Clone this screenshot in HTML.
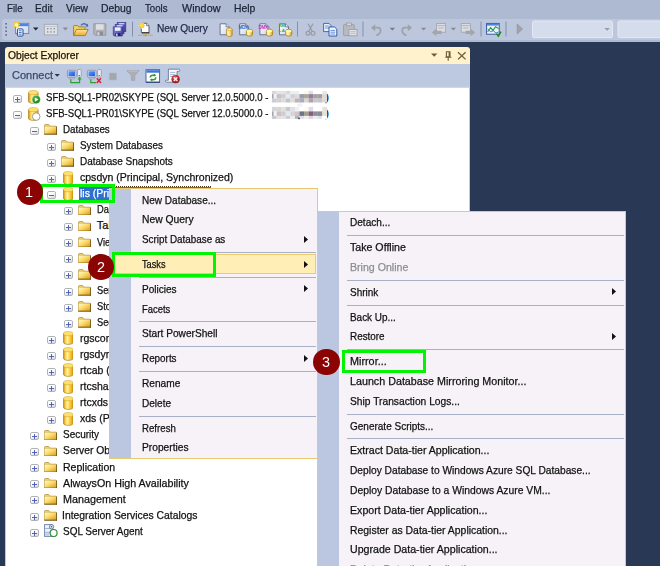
<!DOCTYPE html>
<html lang="en">
<head>
<meta charset="utf-8">
<title>Object Explorer - Tasks - Mirror</title>
<style>
html,body{margin:0;padding:0}
body{width:660px;height:566px;overflow:hidden;background:#293955;position:relative;font-family:"Liberation Sans",sans-serif;font-size:11px;line-height:14px;color:#111}
.abs{position:absolute}
.t{-webkit-text-stroke:0.25px currentColor;position:absolute;white-space:nowrap;transform-origin:0 50%;height:14px;line-height:14px;display:block}
#menubar{left:0;top:0;width:660px;height:42px;background:#aebad1}
#toolbar{left:2px;top:19px;width:670px;height:20.5px;background:#bcc7dd;border-radius:3px}
#oe-title{left:5px;top:47px;width:465px;height:17.3px;background:#fff2cd;border-radius:3px 3px 0 0}
#oe-tools{left:5px;top:64.3px;width:465px;height:23.7px;background:linear-gradient(#bdc8e1 0,#bdc8e1 92%,#d3dbec 100%)}
#oe-tree{left:6px;top:88px;width:463px;height:478px;background:#fff;overflow:hidden}
#oe-frame{left:5px;top:64px;width:465px;height:502px;background:#bdc8e1}
.sep{height:1.2px;background:#a7b0c5}
.menu{background:#f6f2f7;border:1px solid #e8c870;box-sizing:border-box}
.iconcol{background:#bbc6e0}
.hl{background:#ffeeb6;border:1px solid #ebcb72;box-sizing:border-box}
.green{border:3.6px solid #02f402;box-sizing:border-box}
.num{color:#fff;font-size:15px;height:16px;line-height:16px;-webkit-text-stroke:0;transform:scaleX(0.96)}
.circ{border-radius:50%;background:#8b0303;color:#fff;text-align:center}
.blur{filter:blur(1.6px)}
</style>
</head>
<body>
<svg width="0" height="0" style="position:absolute">
<defs>
<linearGradient id="g-folder" x1="0" y1="0" x2="1" y2="1"><stop offset="0" stop-color="#fffad0"/><stop offset="0.42" stop-color="#fbdd70"/><stop offset="1" stop-color="#dc9410"/></linearGradient>
<linearGradient id="g-db" x1="0" y1="0" x2="1" y2="0"><stop offset="0" stop-color="#c08a18"/><stop offset="0.16" stop-color="#f4c840"/><stop offset="0.4" stop-color="#fff2a0"/><stop offset="0.62" stop-color="#fcd648"/><stop offset="1" stop-color="#de980e"/></linearGradient>
<linearGradient id="g-box" x1="0" y1="0" x2="0.6" y2="1"><stop offset="0" stop-color="#ffffff"/><stop offset="0.5" stop-color="#fbfbfc"/><stop offset="1" stop-color="#dcdde2"/></linearGradient>
<radialGradient id="g-go" cx="0.4" cy="0.35"><stop offset="0" stop-color="#58c058"/><stop offset="1" stop-color="#1f8a1f"/></radialGradient>
<g id="i-folder">
<path d="M0.4 3 V1.6 Q0.4 0.5 1.5 0.5 H4.3 Q5 0.5 5.4 1.2 L6 2.2 H12 V3Z" fill="#edcf6e" stroke="#b08a30" stroke-width="0.7"/>
<path d="M0.4 2.6 H12.8 V10.2 H0.4Z" fill="url(#g-folder)"/>
<path d="M0.4 2.6 V10.2" stroke="#c29c40" stroke-width="0.7"/>
<path d="M0.2 10.2 H13 M12.7 2.4 V10.7" stroke="#6b4c10" stroke-width="1" fill="none"/>
</g>
<g id="i-db">
<path d="M0.5 2.6 V11.2 C0.5 12.6 2.6 13.4 5.3 13.4 C8 13.4 10.1 12.6 10.1 11.2 V2.6Z" fill="url(#g-db)" stroke="#b2801c" stroke-width="0.7"/>
<ellipse cx="5.3" cy="2.6" rx="4.8" ry="2.1" fill="#fde06c" stroke="#d0a030" stroke-width="0.5"/>
</g>
<g id="i-srv1"><circle cx="8.2" cy="9.6" r="4.1" fill="url(#g-go)" stroke="#e9f5e9" stroke-width="0.5"/><path d="M6.9 7.4 L10.5 9.6 L6.9 11.8Z" fill="#fff"/></g>
<g id="i-srv2"><circle cx="8.2" cy="9.6" r="3.8" fill="#fff" stroke="#8e9199" stroke-width="0.9"/></g>
<g id="i-agent">
<rect x="0.6" y="0.6" width="7.6" height="11.8" fill="#eef3fb" stroke="#6980a8" stroke-width="0.9"/>
<path d="M1.2 4.5H7.6M1.2 8.3H7.6" stroke="#8ea2c6" stroke-width="0.8"/><path d="M1 9H5V12H1Z" fill="#c4d3ee"/>
<circle cx="7.6" cy="2.8" r="2.2" fill="#dfe6f2" stroke="#5d6f8c" stroke-width="0.8"/><circle cx="7.6" cy="2.8" r="0.8" fill="#4a5a78"/>
<circle cx="9.6" cy="9" r="3.5" fill="#fff" stroke="#2f8f3a" stroke-width="1.2"/>
</g>
</defs>
</svg>

<div id="menubar" class="abs"></div>
<div id="toolbar" class="abs"></div>
<svg class="abs" style="left:0;top:17px" width="660" height="26" viewBox="0 17 660 26">
<defs>
<linearGradient id="tg-win" x1="0" y1="0" x2="1" y2="1"><stop offset="0" stop-color="#ffffff"/><stop offset="1" stop-color="#c6d6f2"/></linearGradient>
<linearGradient id="tg-fold" x1="0" y1="0" x2="0" y2="1"><stop offset="0" stop-color="#ffe9a0"/><stop offset="1" stop-color="#e9a92a"/></linearGradient>
<linearGradient id="tg-cyl" x1="0" y1="0" x2="1" y2="0"><stop offset="0" stop-color="#ffe680"/><stop offset="0.4" stop-color="#fff4b0"/><stop offset="1" stop-color="#e0a010"/></linearGradient>
<linearGradient id="tg-doc" x1="0" y1="0" x2="1" y2="1"><stop offset="0" stop-color="#ffffff"/><stop offset="1" stop-color="#ccd6ec"/></linearGradient>
<radialGradient id="tg-star"><stop offset="0" stop-color="#fffbd0"/><stop offset="0.55" stop-color="#ffd83a"/><stop offset="1" stop-color="#f0b000"/></radialGradient>
<linearGradient id="tg-sv" x1="0" y1="0" x2="1" y2="1"><stop offset="0" stop-color="#8888e0"/><stop offset="1" stop-color="#4444a4"/></linearGradient>
<g id="t-doc"><path d="M0.5 0.5H6.5L9.5 3.5V11.5H0.5Z" fill="url(#tg-doc)" stroke="#5a6b8c" stroke-width="0.9"/><path d="M6.5 0.5V3.5H9.5" fill="#e8eefa" stroke="#5a6b8c" stroke-width="0.8"/></g>
<g id="t-cube"><path d="M0.4 2.6 Q0.4 0.4 3.5 0.4 Q6.6 0.4 6.6 2.6 V5.4 Q6.6 7.3 3.5 7.3 Q0.4 7.3 0.4 5.4Z" fill="url(#tg-cyl)" stroke="#a87c10" stroke-width="0.8"/><ellipse cx="3.5" cy="2.3" rx="2.9" ry="1.4" fill="#fff6a0"/></g>
<g id="t-arrow"><path d="M0 0H5.5L2.75 2.8Z"/></g>
</defs>
<!-- grip -->
<g fill="#5c6b8a"><rect x="5.3" y="23" width="1.6" height="1.6"/><rect x="5.3" y="26.7" width="1.6" height="1.6"/><rect x="5.3" y="30.4" width="1.6" height="1.6"/><rect x="5.3" y="34.1" width="1.6" height="1.6"/></g>
<!-- new project -->
<g>
<rect x="15.4" y="23.3" width="13.4" height="10.3" fill="url(#tg-win)" stroke="#6a82ae" stroke-width="0.9"/>
<rect x="18" y="23.7" width="10.4" height="2.5" fill="#4c86e0"/>
<rect x="17.4" y="28.9" width="5.6" height="7.2" rx="0.9" fill="#f6f9ff" stroke="#2a4688" stroke-width="1"/>
<path d="M18.8 30.8H21.6M18.8 32.5H21.6M18.8 34.2H21.6" stroke="#3f78d8" stroke-width="1"/>
<path d="M16.6 21.4V28.2M13.2 24.8H20M14.2 22.4L19 27.2M19 22.4L14.2 27.2" stroke="#ffd42a" stroke-width="1.1"/>
<circle cx="16.6" cy="24.8" r="1.9" fill="#fff6b8"/>
</g>
<use href="#t-arrow" x="33" y="27.6" fill="#1b2538"/>
<!-- add item (disabled) -->
<g>
<rect x="44.3" y="24.3" width="13.4" height="10.6" fill="#dfe1e6" stroke="#a3a6ae" stroke-width="0.9"/>
<path d="M44.5 26.5H57.5" stroke="#c2c5cc" stroke-width="1"/>
<g fill="#8d9098"><rect x="47" y="28" width="1.4" height="1.4"/><rect x="50.3" y="28" width="1.4" height="1.4"/><rect x="53.6" y="28" width="1.4" height="1.4"/><rect x="47" y="31.2" width="1.4" height="1.4"/><rect x="50.3" y="31.2" width="1.4" height="1.4"/><rect x="53.6" y="31.2" width="1.4" height="1.4"/></g>
</g>
<use href="#t-arrow" x="62.6" y="27.6" fill="#8c8a8e"/>
<!-- open -->
<g>
<path d="M73.5 35.5V26.3Q73.5 25.5 74.3 25.5H77.6L78.8 26.9H84.2Q85 26.9 85 27.7V29.5" fill="#f4cf62" stroke="#a87c1e" stroke-width="0.9"/>
<path d="M73.6 35.6L76.4 29.4H88.2L85.2 35.6Z" fill="url(#tg-fold)" stroke="#a87c1e" stroke-width="0.9"/>
<path d="M81 25.2Q84.2 22.2 86.8 25.4" fill="none" stroke="#3a6fc0" stroke-width="1.3"/><path d="M85.2 26.6L88.2 26.8L87.9 23.6Z" fill="#3a6fc0"/>
</g>
<!-- save disabled -->
<g>
<path d="M93.8 23.8H105.8V35.3H95L93.8 34.1Z" fill="#b4b5ba" stroke="#8f9096" stroke-width="0.8"/>
<rect x="96" y="24.2" width="7.6" height="5.4" fill="#dedfe3"/>
<rect x="96.6" y="31.4" width="6.4" height="3.8" fill="#8c8d93"/><rect x="97.4" y="32.2" width="2" height="3" fill="#d9d9dd"/>
</g>
<!-- save all -->
<g>
<rect x="117.2" y="22.6" width="8.6" height="9" fill="url(#tg-sv)" stroke="#34348a" stroke-width="0.7"/>
<rect x="115.2" y="24.6" width="8.8" height="9.2" fill="url(#tg-sv)" stroke="#34348a" stroke-width="0.7"/>
<path d="M113.3 26.8H122.3V36H114.3L113.3 35Z" fill="url(#tg-sv)" stroke="#2c2c80" stroke-width="0.7"/>
<rect x="115" y="27.4" width="5.6" height="3.4" fill="#eef0ff"/><rect x="115.4" y="33" width="5" height="3" fill="#26265e"/><rect x="116" y="33.6" width="1.6" height="2.2" fill="#d8d8f0"/>
<rect x="117" y="25.2" width="5.4" height="1.2" fill="#dfe2ff"/><rect x="119" y="23.2" width="5.2" height="1.2" fill="#dfe2ff"/>
</g>
<path d="M132.5 21.5V36.5" stroke="#8490ab" stroke-width="1"/>
<!-- new query -->
<g>
<path d="M141.3 23.3H146.6L149 25.7V32.6H141.3Z" fill="#ffffff" stroke="#4a4f5c" stroke-width="0.9"/>
<path d="M146.6 23.3V25.7H149" fill="#e6e9f0" stroke="#4a4f5c" stroke-width="0.7"/>
<path d="M142 32.9H149.4" stroke="#2e3138" stroke-width="1.1"/>
<circle cx="141.6" cy="25.4" r="2.7" fill="url(#tg-star)"/>
<path d="M141.6 21.8V29M138 25.4H145.2M139.1 22.9L144.1 27.9M144.1 22.9L139.1 27.9" stroke="#ffd936" stroke-width="1"/>
<path d="M138 35.2H153" stroke="#d8952a" stroke-width="1.1" stroke-dasharray="1.6 0.8"/><circle cx="145.6" cy="35.2" r="1.3" fill="#e0a030"/><path d="M145.6 33V35" stroke="#caa050" stroke-width="0.8"/>
</g>
<!-- db query docs -->
<g><use href="#t-doc" x="219.6" y="23.3"/><path d="M226.6 29.4 Q226.6 28 229.4 28 Q232.2 28 232.2 29.4 V35 Q232.2 36.5 229.4 36.5 Q226.6 36.5 226.6 35Z" fill="url(#tg-cyl)" stroke="#b07c10" stroke-width="0.7"/><ellipse cx="229.4" cy="29.4" rx="2.6" ry="1.1" fill="#fff0a0" stroke="#c08c18" stroke-width="0.5"/></g>
<g><use href="#t-doc" x="239.2" y="23.3"/><use href="#t-cube" x="246" y="28.8"/><text x="238.4" y="29.3" font-family="Liberation Sans,sans-serif" font-weight="bold" font-size="4.6" fill="#2a6ad0" textLength="10">MDX</text></g>
<g><use href="#t-doc" x="259.4" y="23.3"/><use href="#t-cube" x="266" y="28.8"/><text x="258.4" y="29.3" font-family="Liberation Sans,sans-serif" font-weight="bold" font-size="4.6" fill="#d028c0" textLength="10">DMX</text></g>
<g><use href="#t-doc" x="279" y="23.3"/><use href="#t-cube" x="285.2" y="28.8"/><text x="278.4" y="27.4" font-family="Liberation Sans,sans-serif" font-weight="bold" font-size="4.4" fill="#30a860" textLength="6.5">XM</text><text x="278.4" y="31.8" font-family="Liberation Sans,sans-serif" font-weight="bold" font-size="4.4" fill="#30a860" textLength="6.5">LA</text></g>
<path d="M297.5 21.5V36.5" stroke="#8490ab" stroke-width="1"/>
<!-- cut (disabled) -->
<g fill="none" stroke="#9b9ca3" stroke-width="1.2"><path d="M308 23.6L312.2 31.4M313 23.6L308.8 31.4"/><circle cx="308" cy="33.3" r="1.9"/><circle cx="313" cy="33.3" r="1.9"/></g>
<!-- copy -->
<g><path d="M323.6 23.4H329L331 25.4V31.6H323.6Z" fill="#eaf1ff" stroke="#2f5fb8" stroke-width="0.9"/><path d="M325 26H329.4M325 28H329.4" stroke="#4c86e0" stroke-width="0.8"/>
<path d="M329 27H334.6L336.8 29.2V36H329Z" fill="#f4f8ff" stroke="#244a9c" stroke-width="0.9"/><path d="M330.4 30.4H335.2M330.4 32.2H335.2M330.4 34H335.2" stroke="#3f78d8" stroke-width="0.8"/></g>
<!-- paste (disabled) -->
<g><rect x="343.6" y="24.4" width="10.6" height="11.2" rx="0.8" fill="#b9bac0" stroke="#95969c" stroke-width="0.8"/><rect x="346.4" y="23" width="5" height="2.8" fill="#d4d5da" stroke="#95969c" stroke-width="0.7"/>
<rect x="349" y="29.4" width="8" height="6.4" fill="#e0e1e6" stroke="#9a9ba2" stroke-width="0.8"/><path d="M350.4 31.6H355.6M350.4 33.4H355.6" stroke="#b0b1b8" stroke-width="0.7"/></g>
<path d="M363 21.5V36.5" stroke="#8490ab" stroke-width="1"/>
<!-- undo / redo disabled -->
<g fill="none" stroke="#9fa1aa" stroke-width="1.7"><path d="M373.2 27.6H378Q380.6 27.6 380.6 30.4Q380.6 33.6 376.4 35.4"/></g><path d="M371 27.8L375.2 24.2V31.2Z" fill="#9fa1aa"/>
<use href="#t-arrow" x="389.6" y="27.8" fill="#76798a" transform="translate(0 0)"/>
<g fill="none" stroke="#9fa1aa" stroke-width="1.7"><path d="M409.4 27.6H404.8Q402.2 27.6 402.2 30.4Q402.2 33.6 406.4 35.4"/></g><path d="M412 27.8L407.8 24.2V31.2Z" fill="#9fa1aa"/>
<use href="#t-arrow" x="420.8" y="27.8" fill="#8c8a8e"/>
<!-- nav back / fwd disabled -->
<g><rect x="436.4" y="23.6" width="9.2" height="8.6" fill="#dcdde2" stroke="#a2a3aa" stroke-width="0.8"/><path d="M436.6 25.6H445.4" stroke="#b5b6bd" stroke-width="1"/><path d="M438.4 28H443.6" stroke="#a9aab1" stroke-width="0.8"/><path d="M431.8 32.4L436.4 28.6V30.8H441.6V34H436.4V36.2Z" fill="#a5a6ad"/></g>
<use href="#t-arrow" x="450.6" y="27.8" fill="#8c8a8e"/>
<g><rect x="461.2" y="23.6" width="9.2" height="8.6" fill="#dcdde2" stroke="#a2a3aa" stroke-width="0.8"/><path d="M461.4 25.6H470.2" stroke="#b5b6bd" stroke-width="1"/><path d="M463.2 28H468.4" stroke="#a9aab1" stroke-width="0.8"/><path d="M475.2 32.4L470.6 28.6V30.8H465.4V34H470.6V36.2Z" fill="#a5a6ad"/></g>
<path d="M481 21.5V36.5" stroke="#8490ab" stroke-width="1"/>
<!-- activity monitor -->
<g><rect x="486.6" y="23.4" width="12.6" height="10.8" fill="#eaf2ff" stroke="#2c4f9c" stroke-width="0.9"/><rect x="487" y="23.8" width="11.8" height="1.8" fill="#4c86e0"/>
<path d="M487.6 31.8L490.6 27.6L493 30.4L495.6 26.8L498.6 28.6" fill="none" stroke="#2e9a2e" stroke-width="1.1"/><path d="M487.6 29L490.4 31.6L493.4 30.8L496 33L498.6 32" fill="none" stroke="#3a6fd0" stroke-width="0.9"/>
<path d="M496.4 33.6L498.4 36.2L501 31.6" fill="none" stroke="#1f8a1f" stroke-width="1.5"/></g>
<path d="M506 21.5V36.5" stroke="#8490ab" stroke-width="1"/>
<path d="M517.2 24L522.6 29L517.2 34Z" fill="#a2a3aa" stroke="#8d8e96" stroke-width="0.6"/>
<!-- combos -->
<rect x="532.5" y="21" width="80" height="16.6" rx="1.5" fill="#d5dcec" stroke="#e3e8f3" stroke-width="1"/>
<use href="#t-arrow" x="604.4" y="28" fill="#9a9da8"/>
<rect x="618" y="21" width="60" height="16.6" rx="1.5" fill="#d5dcec" stroke="#e3e8f3" stroke-width="1"/>
</svg>

<div id="oe-frame" class="abs"></div>
<div id="oe-title" class="abs"></div>
<div id="oe-tools" class="abs"></div>
<svg class="abs" style="left:0;top:46px" width="480" height="44" viewBox="0 46 480 44">
<defs>
<linearGradient id="og-scr" x1="0" y1="0" x2="1" y2="1"><stop offset="0" stop-color="#5a9cff"/><stop offset="1" stop-color="#1a54dc"/></linearGradient>
<radialGradient id="og-red" cx="0.4" cy="0.35"><stop offset="0" stop-color="#f7a0a0"/><stop offset="0.5" stop-color="#de3a3a"/><stop offset="1" stop-color="#b01818"/></radialGradient>
<g id="o-pc">
<rect x="0.4" y="0.9" width="8.6" height="7" rx="0.8" fill="#dfe5ef" stroke="#7d8aa6" stroke-width="0.8"/>
<rect x="1.5" y="1.9" width="6.4" height="4.9" fill="url(#og-scr)"/>
<path d="M2.2 8.4H7.4V9.6H2.2Z" fill="#c9d0dd" stroke="#8894ad" stroke-width="0.5"/>
<rect x="10.6" y="0.2" width="3.6" height="7.4" rx="0.6" fill="#eef1f6" stroke="#8894ad" stroke-width="0.8"/>
<rect x="11.6" y="5.6" width="1.4" height="1" fill="#3da03d"/>
</g>
</defs>
<!-- title bar buttons -->
<path d="M431 53.6H437.4L434.2 56.8Z" fill="#6f5c33"/>
<g fill="none" stroke="#6f5c33" stroke-width="1.1"><path d="M446.4 51.8H450V56.8H446.4ZM449.2 51.8V56.8M445.2 57.2H451.4M448.2 57.4V60.8"/></g>
<path d="M458 52.2L465.6 59.4M465.6 52.2L458 59.4" stroke="#6f5c33" stroke-width="1.3" fill="none"/>
<!-- connect arrow -->
<path d="M54.6 74H59.8L57.2 76.7Z" fill="#27344f"/>
<!-- connect -->
<use href="#o-pc" x="67" y="69.4"/>
<path d="M70.8 79.2V82.6H79.6V79" fill="none" stroke="#2ea02e" stroke-width="1.2"/><path d="M77.4 79.4L79.6 76.8L81.8 79.4Z" fill="#2ea02e"/>
<!-- disconnect -->
<use href="#o-pc" x="87" y="69.4"/>
<path d="M90.8 79.2V82.6H96" fill="none" stroke="#2ea02e" stroke-width="1.2"/>
<path d="M96.8 78.2L101 83M101 78.2L96.8 83" stroke="#e82222" stroke-width="1.5"/>
<!-- stop (disabled) -->
<rect x="109.2" y="73" width="7.4" height="7" fill="#a2a6b0" stroke="#b4b9c6" stroke-width="0.6"/>
<!-- filter (disabled) -->
<path d="M126.8 70.6H139.2L134.8 75.6V80.4H131.4V75.6Z" fill="#adaeb3" stroke="#9a9ba0" stroke-width="0.5"/>
<path d="M128.4 71.2H137.6" stroke="#c6c7cb" stroke-width="0.9"/>
<!-- refresh -->
<rect x="146" y="69.7" width="13.6" height="12.4" fill="#ffffff" stroke="#3a5aa0" stroke-width="0.9"/>
<rect x="146.5" y="70.2" width="12.6" height="2.5" fill="#3d74dc"/>
<path d="M146 82.3H159.8" stroke="#16295a" stroke-width="0.8"/>
<g fill="none" stroke="#2f9a2f" stroke-width="1.4"><path d="M150.2 77.6Q150.2 75.2 153 75.2H154.2"/><path d="M155.8 77.2Q155.8 79.8 153 79.8H151.8"/></g>
<path d="M153.8 73.6L156.2 75.2L153.8 76.8Z" fill="#2f9a2f"/><path d="M152.2 78.2L149.8 79.8L152.2 81.4Z" fill="#2f9a2f"/>
<!-- stop script -->
<path d="M168.4 69.2H178.6Q179.8 69.2 179.8 70.4Q179.8 71.4 178.6 71.4H177V80.6Q177 82.2 175.4 82.2H166.6Q165.4 82.2 165.4 81.2Q165.4 80.2 166.6 80.2H168.4Z" fill="#fbfcff" stroke="#5a6b8c" stroke-width="0.8"/>
<path d="M170 72.4H175.4M170 74.4H175.4M170 76.4H173" stroke="#8fa3c8" stroke-width="0.8"/>
<circle cx="175.6" cy="79.2" r="3.9" fill="url(#og-red)" stroke="#a01414" stroke-width="0.5"/>
<path d="M173.8 77.4L177.4 81M177.4 77.4L173.8 81" stroke="#fff" stroke-width="1.2"/>
</svg>

<div id="oe-tree" class="abs"></div>
<!-- selection highlight for lis -->
<div class="abs" style="left:78.5px;top:186.7px;width:132.5px;height:13.3px;background:#2f6fd0"></div>
<div class="abs" style="left:78.5px;top:185.7px;width:132.5px;height:0;border-top:1px dotted #4a3414"></div>
<svg class="abs" style="left:13px;top:95px" width="9" height="8" viewBox="0 0 9 8"><rect x="0.5" y="0.5" width="8" height="7" rx="1.4" fill="url(#g-box)" stroke="#a7a9b0" stroke-width="0.9"/><path d="M2 4.5H7" stroke="#5365b4" stroke-width="1"/><path d="M4.5 2V7" stroke="#5365b4" stroke-width="1"/></svg>
<svg class="abs" style="left:28.4px;top:90.4px" width="13" height="14" viewBox="0 0 13 14"><use href="#i-db"/><use href="#i-srv1"/></svg>
<svg class="abs" style="left:13px;top:111px" width="9" height="8" viewBox="0 0 9 8"><rect x="0.5" y="0.5" width="8" height="7" rx="1.4" fill="url(#g-box)" stroke="#a7a9b0" stroke-width="0.9"/><path d="M2 4.5H7" stroke="#5365b4" stroke-width="1"/></svg>
<svg class="abs" style="left:28.4px;top:106.5px" width="13" height="14" viewBox="0 0 13 14"><use href="#i-db"/><use href="#i-srv2"/></svg>
<svg class="abs" style="left:30px;top:127px" width="9" height="8" viewBox="0 0 9 8"><rect x="0.5" y="0.5" width="8" height="7" rx="1.4" fill="url(#g-box)" stroke="#a7a9b0" stroke-width="0.9"/><path d="M2 4.5H7" stroke="#5365b4" stroke-width="1"/></svg>
<svg class="abs" style="left:43.7px;top:124.1px" width="13.2" height="10.8" viewBox="0 0 13.2 10.8"><use href="#i-folder"/></svg>
<svg class="abs" style="left:47px;top:143px" width="9" height="8" viewBox="0 0 9 8"><rect x="0.5" y="0.5" width="8" height="7" rx="1.4" fill="url(#g-box)" stroke="#a7a9b0" stroke-width="0.9"/><path d="M2 4.5H7" stroke="#5365b4" stroke-width="1"/><path d="M4.5 2V7" stroke="#5365b4" stroke-width="1"/></svg>
<svg class="abs" style="left:60.8px;top:140.2px" width="13.2" height="10.8" viewBox="0 0 13.2 10.8"><use href="#i-folder"/></svg>
<svg class="abs" style="left:47px;top:159px" width="9" height="8" viewBox="0 0 9 8"><rect x="0.5" y="0.5" width="8" height="7" rx="1.4" fill="url(#g-box)" stroke="#a7a9b0" stroke-width="0.9"/><path d="M2 4.5H7" stroke="#5365b4" stroke-width="1"/><path d="M4.5 2V7" stroke="#5365b4" stroke-width="1"/></svg>
<svg class="abs" style="left:60.8px;top:156.3px" width="13.2" height="10.8" viewBox="0 0 13.2 10.8"><use href="#i-folder"/></svg>
<svg class="abs" style="left:47px;top:175px" width="9" height="8" viewBox="0 0 9 8"><rect x="0.5" y="0.5" width="8" height="7" rx="1.4" fill="url(#g-box)" stroke="#a7a9b0" stroke-width="0.9"/><path d="M2 4.5H7" stroke="#5365b4" stroke-width="1"/><path d="M4.5 2V7" stroke="#5365b4" stroke-width="1"/></svg>
<svg class="abs" style="left:62.8px;top:170.5px" width="10.6" height="14" viewBox="0 0 10.6 14"><use href="#i-db"/></svg>
<svg class="abs" style="left:47px;top:191px" width="9" height="8" viewBox="0 0 9 8"><rect x="0.5" y="0.5" width="8" height="7" rx="1.4" fill="url(#g-box)" stroke="#a7a9b0" stroke-width="0.9"/><path d="M2 4.5H7" stroke="#5365b4" stroke-width="1"/></svg>
<svg class="abs" style="left:62.8px;top:186.6px" width="10.6" height="14" viewBox="0 0 10.6 14"><use href="#i-db"/></svg>
<svg class="abs" style="left:64px;top:207px" width="9" height="8" viewBox="0 0 9 8"><rect x="0.5" y="0.5" width="8" height="7" rx="1.4" fill="url(#g-box)" stroke="#a7a9b0" stroke-width="0.9"/><path d="M2 4.5H7" stroke="#5365b4" stroke-width="1"/><path d="M4.5 2V7" stroke="#5365b4" stroke-width="1"/></svg>
<svg class="abs" style="left:77.8px;top:204.5px" width="13.2" height="10.8" viewBox="0 0 13.2 10.8"><use href="#i-folder"/></svg>
<svg class="abs" style="left:64px;top:223px" width="9" height="8" viewBox="0 0 9 8"><rect x="0.5" y="0.5" width="8" height="7" rx="1.4" fill="url(#g-box)" stroke="#a7a9b0" stroke-width="0.9"/><path d="M2 4.5H7" stroke="#5365b4" stroke-width="1"/><path d="M4.5 2V7" stroke="#5365b4" stroke-width="1"/></svg>
<svg class="abs" style="left:77.8px;top:220.6px" width="13.2" height="10.8" viewBox="0 0 13.2 10.8"><use href="#i-folder"/></svg>
<svg class="abs" style="left:64px;top:239px" width="9" height="8" viewBox="0 0 9 8"><rect x="0.5" y="0.5" width="8" height="7" rx="1.4" fill="url(#g-box)" stroke="#a7a9b0" stroke-width="0.9"/><path d="M2 4.5H7" stroke="#5365b4" stroke-width="1"/><path d="M4.5 2V7" stroke="#5365b4" stroke-width="1"/></svg>
<svg class="abs" style="left:77.8px;top:236.6px" width="13.2" height="10.8" viewBox="0 0 13.2 10.8"><use href="#i-folder"/></svg>
<svg class="abs" style="left:64px;top:255px" width="9" height="8" viewBox="0 0 9 8"><rect x="0.5" y="0.5" width="8" height="7" rx="1.4" fill="url(#g-box)" stroke="#a7a9b0" stroke-width="0.9"/><path d="M2 4.5H7" stroke="#5365b4" stroke-width="1"/><path d="M4.5 2V7" stroke="#5365b4" stroke-width="1"/></svg>
<svg class="abs" style="left:77.8px;top:252.7px" width="13.2" height="10.8" viewBox="0 0 13.2 10.8"><use href="#i-folder"/></svg>
<svg class="abs" style="left:64px;top:271px" width="9" height="8" viewBox="0 0 9 8"><rect x="0.5" y="0.5" width="8" height="7" rx="1.4" fill="url(#g-box)" stroke="#a7a9b0" stroke-width="0.9"/><path d="M2 4.5H7" stroke="#5365b4" stroke-width="1"/><path d="M4.5 2V7" stroke="#5365b4" stroke-width="1"/></svg>
<svg class="abs" style="left:77.8px;top:268.8px" width="13.2" height="10.8" viewBox="0 0 13.2 10.8"><use href="#i-folder"/></svg>
<svg class="abs" style="left:64px;top:288px" width="9" height="8" viewBox="0 0 9 8"><rect x="0.5" y="0.5" width="8" height="7" rx="1.4" fill="url(#g-box)" stroke="#a7a9b0" stroke-width="0.9"/><path d="M2 4.5H7" stroke="#5365b4" stroke-width="1"/><path d="M4.5 2V7" stroke="#5365b4" stroke-width="1"/></svg>
<svg class="abs" style="left:77.8px;top:284.8px" width="13.2" height="10.8" viewBox="0 0 13.2 10.8"><use href="#i-folder"/></svg>
<svg class="abs" style="left:64px;top:304px" width="9" height="8" viewBox="0 0 9 8"><rect x="0.5" y="0.5" width="8" height="7" rx="1.4" fill="url(#g-box)" stroke="#a7a9b0" stroke-width="0.9"/><path d="M2 4.5H7" stroke="#5365b4" stroke-width="1"/><path d="M4.5 2V7" stroke="#5365b4" stroke-width="1"/></svg>
<svg class="abs" style="left:77.8px;top:300.9px" width="13.2" height="10.8" viewBox="0 0 13.2 10.8"><use href="#i-folder"/></svg>
<svg class="abs" style="left:64px;top:320px" width="9" height="8" viewBox="0 0 9 8"><rect x="0.5" y="0.5" width="8" height="7" rx="1.4" fill="url(#g-box)" stroke="#a7a9b0" stroke-width="0.9"/><path d="M2 4.5H7" stroke="#5365b4" stroke-width="1"/><path d="M4.5 2V7" stroke="#5365b4" stroke-width="1"/></svg>
<svg class="abs" style="left:77.8px;top:317.0px" width="13.2" height="10.8" viewBox="0 0 13.2 10.8"><use href="#i-folder"/></svg>
<svg class="abs" style="left:47px;top:336px" width="9" height="8" viewBox="0 0 9 8"><rect x="0.5" y="0.5" width="8" height="7" rx="1.4" fill="url(#g-box)" stroke="#a7a9b0" stroke-width="0.9"/><path d="M2 4.5H7" stroke="#5365b4" stroke-width="1"/><path d="M4.5 2V7" stroke="#5365b4" stroke-width="1"/></svg>
<svg class="abs" style="left:62.8px;top:331.2px" width="10.6" height="14" viewBox="0 0 10.6 14"><use href="#i-db"/></svg>
<svg class="abs" style="left:47px;top:352px" width="9" height="8" viewBox="0 0 9 8"><rect x="0.5" y="0.5" width="8" height="7" rx="1.4" fill="url(#g-box)" stroke="#a7a9b0" stroke-width="0.9"/><path d="M2 4.5H7" stroke="#5365b4" stroke-width="1"/><path d="M4.5 2V7" stroke="#5365b4" stroke-width="1"/></svg>
<svg class="abs" style="left:62.8px;top:347.3px" width="10.6" height="14" viewBox="0 0 10.6 14"><use href="#i-db"/></svg>
<svg class="abs" style="left:47px;top:368px" width="9" height="8" viewBox="0 0 9 8"><rect x="0.5" y="0.5" width="8" height="7" rx="1.4" fill="url(#g-box)" stroke="#a7a9b0" stroke-width="0.9"/><path d="M2 4.5H7" stroke="#5365b4" stroke-width="1"/><path d="M4.5 2V7" stroke="#5365b4" stroke-width="1"/></svg>
<svg class="abs" style="left:62.8px;top:363.4px" width="10.6" height="14" viewBox="0 0 10.6 14"><use href="#i-db"/></svg>
<svg class="abs" style="left:47px;top:384px" width="9" height="8" viewBox="0 0 9 8"><rect x="0.5" y="0.5" width="8" height="7" rx="1.4" fill="url(#g-box)" stroke="#a7a9b0" stroke-width="0.9"/><path d="M2 4.5H7" stroke="#5365b4" stroke-width="1"/><path d="M4.5 2V7" stroke="#5365b4" stroke-width="1"/></svg>
<svg class="abs" style="left:62.8px;top:379.5px" width="10.6" height="14" viewBox="0 0 10.6 14"><use href="#i-db"/></svg>
<svg class="abs" style="left:47px;top:400px" width="9" height="8" viewBox="0 0 9 8"><rect x="0.5" y="0.5" width="8" height="7" rx="1.4" fill="url(#g-box)" stroke="#a7a9b0" stroke-width="0.9"/><path d="M2 4.5H7" stroke="#5365b4" stroke-width="1"/><path d="M4.5 2V7" stroke="#5365b4" stroke-width="1"/></svg>
<svg class="abs" style="left:62.8px;top:395.5px" width="10.6" height="14" viewBox="0 0 10.6 14"><use href="#i-db"/></svg>
<svg class="abs" style="left:47px;top:416px" width="9" height="8" viewBox="0 0 9 8"><rect x="0.5" y="0.5" width="8" height="7" rx="1.4" fill="url(#g-box)" stroke="#a7a9b0" stroke-width="0.9"/><path d="M2 4.5H7" stroke="#5365b4" stroke-width="1"/><path d="M4.5 2V7" stroke="#5365b4" stroke-width="1"/></svg>
<svg class="abs" style="left:62.8px;top:411.6px" width="10.6" height="14" viewBox="0 0 10.6 14"><use href="#i-db"/></svg>
<svg class="abs" style="left:30px;top:432px" width="9" height="8" viewBox="0 0 9 8"><rect x="0.5" y="0.5" width="8" height="7" rx="1.4" fill="url(#g-box)" stroke="#a7a9b0" stroke-width="0.9"/><path d="M2 4.5H7" stroke="#5365b4" stroke-width="1"/><path d="M4.5 2V7" stroke="#5365b4" stroke-width="1"/></svg>
<svg class="abs" style="left:43.7px;top:429.5px" width="13.2" height="10.8" viewBox="0 0 13.2 10.8"><use href="#i-folder"/></svg>
<svg class="abs" style="left:30px;top:448px" width="9" height="8" viewBox="0 0 9 8"><rect x="0.5" y="0.5" width="8" height="7" rx="1.4" fill="url(#g-box)" stroke="#a7a9b0" stroke-width="0.9"/><path d="M2 4.5H7" stroke="#5365b4" stroke-width="1"/><path d="M4.5 2V7" stroke="#5365b4" stroke-width="1"/></svg>
<svg class="abs" style="left:43.7px;top:445.5px" width="13.2" height="10.8" viewBox="0 0 13.2 10.8"><use href="#i-folder"/></svg>
<svg class="abs" style="left:30px;top:464px" width="9" height="8" viewBox="0 0 9 8"><rect x="0.5" y="0.5" width="8" height="7" rx="1.4" fill="url(#g-box)" stroke="#a7a9b0" stroke-width="0.9"/><path d="M2 4.5H7" stroke="#5365b4" stroke-width="1"/><path d="M4.5 2V7" stroke="#5365b4" stroke-width="1"/></svg>
<svg class="abs" style="left:43.7px;top:461.6px" width="13.2" height="10.8" viewBox="0 0 13.2 10.8"><use href="#i-folder"/></svg>
<svg class="abs" style="left:30px;top:480px" width="9" height="8" viewBox="0 0 9 8"><rect x="0.5" y="0.5" width="8" height="7" rx="1.4" fill="url(#g-box)" stroke="#a7a9b0" stroke-width="0.9"/><path d="M2 4.5H7" stroke="#5365b4" stroke-width="1"/><path d="M4.5 2V7" stroke="#5365b4" stroke-width="1"/></svg>
<svg class="abs" style="left:43.7px;top:477.7px" width="13.2" height="10.8" viewBox="0 0 13.2 10.8"><use href="#i-folder"/></svg>
<svg class="abs" style="left:30px;top:496px" width="9" height="8" viewBox="0 0 9 8"><rect x="0.5" y="0.5" width="8" height="7" rx="1.4" fill="url(#g-box)" stroke="#a7a9b0" stroke-width="0.9"/><path d="M2 4.5H7" stroke="#5365b4" stroke-width="1"/><path d="M4.5 2V7" stroke="#5365b4" stroke-width="1"/></svg>
<svg class="abs" style="left:43.7px;top:493.8px" width="13.2" height="10.8" viewBox="0 0 13.2 10.8"><use href="#i-folder"/></svg>
<svg class="abs" style="left:30px;top:513px" width="9" height="8" viewBox="0 0 9 8"><rect x="0.5" y="0.5" width="8" height="7" rx="1.4" fill="url(#g-box)" stroke="#a7a9b0" stroke-width="0.9"/><path d="M2 4.5H7" stroke="#5365b4" stroke-width="1"/><path d="M4.5 2V7" stroke="#5365b4" stroke-width="1"/></svg>
<svg class="abs" style="left:43.7px;top:509.8px" width="13.2" height="10.8" viewBox="0 0 13.2 10.8"><use href="#i-folder"/></svg>
<svg class="abs" style="left:30px;top:529px" width="9" height="8" viewBox="0 0 9 8"><rect x="0.5" y="0.5" width="8" height="7" rx="1.4" fill="url(#g-box)" stroke="#a7a9b0" stroke-width="0.9"/><path d="M2 4.5H7" stroke="#5365b4" stroke-width="1"/><path d="M4.5 2V7" stroke="#5365b4" stroke-width="1"/></svg>
<svg class="abs" style="left:43.7px;top:524.1px" width="14" height="13" viewBox="0 0 14 13"><use href="#i-agent"/></svg>
<span class="t" style="left:6.50px;top:1.0px;color:#1b2538;transform:scaleX(0.8803);">File</span>
<span class="t" style="left:35.00px;top:1.0px;color:#1b2538;transform:scaleX(0.9260);">Edit</span>
<span class="t" style="left:65.50px;top:1.0px;color:#1b2538;transform:scaleX(0.9283);">View</span>
<span class="t" style="left:100.50px;top:1.0px;color:#1b2538;transform:scaleX(0.9444);">Debug</span>
<span class="t" style="left:144.50px;top:1.0px;color:#1b2538;transform:scaleX(0.8786);">Tools</span>
<span class="t" style="left:182.00px;top:1.0px;color:#1b2538;transform:scaleX(0.9827);">Window</span>
<span class="t" style="left:233.70px;top:1.0px;color:#1b2538;transform:scaleX(0.9464);">Help</span>
<span class="t" style="left:156.70px;top:21.0px;color:#1e2c47;transform:scaleX(0.9241);">New Query</span>
<span class="t" style="left:7.80px;top:48.0px;color:#1a1408;transform:scaleX(0.9351);">Object Explorer</span>
<span class="t" style="left:12.00px;top:68.0px;color:#3a4a68;transform:scaleX(1.0021);">Connect</span>
<span class="t" style="left:45.80px;top:90.0px;color:#111;transform:scaleX(0.8694);">SFB-SQL1-PR02\SKYPE (SQL Server 12.0.5000.0 - </span>
<span class="t" style="left:45.80px;top:106.0px;color:#111;transform:scaleX(0.8694);">SFB-SQL1-PR01\SKYPE (SQL Server 12.0.5000.0 - </span>
<span class="t" style="left:62.80px;top:122.0px;color:#111;transform:scaleX(0.8891);">Databases</span>
<span class="t" style="left:80.00px;top:138.0px;color:#111;transform:scaleX(0.8975);">System Databases</span>
<span class="t" style="left:80.00px;top:154.0px;color:#111;transform:scaleX(0.9091);">Database Snapshots</span>
<span class="t" style="left:80.00px;top:170.0px;color:#111;transform:scaleX(0.9573);">cpsdyn (Principal, Synchronized)</span>
<span class="t" style="left:80.00px;top:186.0px;color:#fff;transform:scaleX(0.9550);">lis (Principal, Synchronized)</span>
<span class="t" style="left:96.80px;top:202.0px;color:#111;transform:scaleX(0.8450);">Database Diagrams</span>
<span class="t" style="left:96.80px;top:218.0px;color:#111;transform:scaleX(1.0000);">Tables</span>
<span class="t" style="left:96.80px;top:235.0px;color:#111;transform:scaleX(0.8450);">Views</span>
<span class="t" style="left:96.80px;top:251.0px;color:#111;transform:scaleX(0.8450);">Synonyms</span>
<span class="t" style="left:96.80px;top:267.0px;color:#111;transform:scaleX(0.8450);">Programmability</span>
<span class="t" style="left:96.80px;top:283.0px;color:#111;transform:scaleX(0.8450);">Service Broker</span>
<span class="t" style="left:96.80px;top:299.0px;color:#111;transform:scaleX(0.8450);">Storage</span>
<span class="t" style="left:96.80px;top:315.0px;color:#111;transform:scaleX(0.8450);">Security</span>
<span class="t" style="left:80.00px;top:331.0px;color:#111;transform:scaleX(0.9550);">rgsconfig (Principal, Synchronized)</span>
<span class="t" style="left:80.00px;top:347.0px;color:#111;transform:scaleX(0.9550);">rgsdyn (Principal, Synchronized)</span>
<span class="t" style="left:80.00px;top:363.0px;color:#111;transform:scaleX(0.9550);">rtcab (Principal, Synchronized)</span>
<span class="t" style="left:80.00px;top:379.0px;color:#111;transform:scaleX(0.9550);">rtcshared (Principal, Synchronized)</span>
<span class="t" style="left:80.00px;top:395.0px;color:#111;transform:scaleX(0.9550);">rtcxds (Principal, Synchronized)</span>
<span class="t" style="left:80.00px;top:411.0px;color:#111;transform:scaleX(0.9550);">xds (Principal, Synchronized)</span>
<span class="t" style="left:62.80px;top:427.0px;color:#111;transform:scaleX(0.9072);">Security</span>
<span class="t" style="left:62.80px;top:443.0px;color:#111;transform:scaleX(0.9400);">Server Objects</span>
<span class="t" style="left:62.80px;top:460.0px;color:#111;transform:scaleX(0.9576);">Replication</span>
<span class="t" style="left:62.80px;top:476.0px;color:#111;transform:scaleX(0.9730);">AlwaysOn High Availability</span>
<span class="t" style="left:62.80px;top:492.0px;color:#111;transform:scaleX(0.9782);">Management</span>
<span class="t" style="left:61.86px;top:508.0px;color:#111;transform:scaleX(0.9428);">Integration Services Catalogs</span>
<span class="t" style="left:62.80px;top:524.0px;color:#111;transform:scaleX(0.9052);">SQL Server Agent</span>
<span class="t" style="left:325.20px;top:90.0px;color:#111;transform:scaleX(1.0000);">)</span>
<span class="t" style="left:325.20px;top:106.0px;color:#111;transform:scaleX(1.0000);">)</span>
<!-- blurred server names -->
<svg class="abs" style="left:268px;top:88px;filter:blur(0.7px)" width="64" height="34" viewBox="268 88 64 34"><rect x="272.00" y="90.9" width="4.67" height="3.3" fill="#d8d8dc"/><rect x="276.57" y="90.9" width="4.67" height="3.3" fill="#e8e4e0"/><rect x="281.15" y="90.9" width="4.67" height="3.3" fill="#dce4ec"/><rect x="285.73" y="90.9" width="4.67" height="3.3" fill="#d8d8d8"/><rect x="290.30" y="90.9" width="4.67" height="3.3" fill="#eceef0"/><rect x="294.88" y="90.9" width="4.67" height="3.3" fill="#eceef0"/><rect x="299.45" y="90.9" width="4.67" height="3.3" fill="#ffffff"/><rect x="304.02" y="90.9" width="4.67" height="3.3" fill="#f8f8f0"/><rect x="308.60" y="90.9" width="4.67" height="3.3" fill="#e4dcec"/><rect x="313.18" y="90.9" width="4.67" height="3.3" fill="#ffffff"/><rect x="317.75" y="90.9" width="4.67" height="3.3" fill="#ffffff"/><rect x="322.32" y="90.9" width="4.67" height="3.3" fill="#e8e8e8"/><rect x="272.00" y="94.1" width="4.67" height="4.5" fill="#f0f4f8"/><rect x="276.57" y="94.1" width="4.67" height="4.5" fill="#c4c2cc"/><rect x="281.15" y="94.1" width="4.67" height="4.5" fill="#dcc8c8"/><rect x="285.73" y="94.1" width="4.67" height="4.5" fill="#dcecf0"/><rect x="290.30" y="94.1" width="4.67" height="4.5" fill="#d0d0d8"/><rect x="294.88" y="94.1" width="4.67" height="4.5" fill="#dcdadc"/><rect x="299.45" y="94.1" width="4.67" height="4.5" fill="#9a9ca4"/><rect x="304.02" y="94.1" width="4.67" height="4.5" fill="#a8a898"/><rect x="308.60" y="94.1" width="4.67" height="4.5" fill="#94809a"/><rect x="313.18" y="94.1" width="4.67" height="4.5" fill="#a4a49c"/><rect x="317.75" y="94.1" width="4.67" height="4.5" fill="#a0a0a8"/><rect x="322.32" y="94.1" width="4.67" height="4.5" fill="#e0d8d0"/><rect x="272.00" y="98.5" width="4.67" height="4.0" fill="#c8ccd4"/><rect x="276.57" y="98.5" width="4.67" height="4.0" fill="#d4d0d0"/><rect x="281.15" y="98.5" width="4.67" height="4.0" fill="#dcdcd8"/><rect x="285.73" y="98.5" width="4.67" height="4.0" fill="#c0c4cc"/><rect x="290.30" y="98.5" width="4.67" height="4.0" fill="#e0dcd8"/><rect x="294.88" y="98.5" width="4.67" height="4.0" fill="#b8b4b8"/><rect x="299.45" y="98.5" width="4.67" height="4.0" fill="#a8acbc"/><rect x="304.02" y="98.5" width="4.67" height="4.0" fill="#d8d8d0"/><rect x="308.60" y="98.5" width="4.67" height="4.0" fill="#b0a0b0"/><rect x="313.18" y="98.5" width="4.67" height="4.0" fill="#c8c8cc"/><rect x="317.75" y="98.5" width="4.67" height="4.0" fill="#c4c4cc"/><rect x="322.32" y="98.5" width="4.67" height="4.0" fill="#e0d8d0"/><rect x="272" y="94.1" width="1.6" height="4.4" fill="#a9a4a8"/><rect x="272.00" y="106.9" width="4.67" height="4.6" fill="#d4d4dc"/><rect x="276.57" y="106.9" width="4.67" height="4.6" fill="#d8d4d4"/><rect x="281.15" y="106.9" width="4.67" height="4.6" fill="#e0e0dc"/><rect x="285.73" y="106.9" width="4.67" height="4.6" fill="#c8c8d0"/><rect x="290.30" y="106.9" width="4.67" height="4.6" fill="#e0e0e4"/><rect x="294.88" y="106.9" width="4.67" height="4.6" fill="#f0f0f4"/><rect x="299.45" y="106.9" width="4.67" height="4.6" fill="#ffffff"/><rect x="304.02" y="106.9" width="4.67" height="4.6" fill="#fcfcf0"/><rect x="308.60" y="106.9" width="4.67" height="4.6" fill="#e0d8ec"/><rect x="313.18" y="106.9" width="4.67" height="4.6" fill="#ffffff"/><rect x="317.75" y="106.9" width="4.67" height="4.6" fill="#ffffff"/><rect x="322.32" y="106.9" width="4.67" height="4.6" fill="#e8e0d8"/><rect x="272.00" y="111.4" width="4.67" height="4.6" fill="#f0f4fc"/><rect x="276.57" y="111.4" width="4.67" height="4.6" fill="#c4c2cc"/><rect x="281.15" y="111.4" width="4.67" height="4.6" fill="#dcc8c8"/><rect x="285.73" y="111.4" width="4.67" height="4.6" fill="#dcecf0"/><rect x="290.30" y="111.4" width="4.67" height="4.6" fill="#d4d4dc"/><rect x="294.88" y="111.4" width="4.67" height="4.6" fill="#d4c4c4"/><rect x="299.45" y="111.4" width="4.67" height="4.6" fill="#6c7488"/><rect x="304.02" y="111.4" width="4.67" height="4.6" fill="#a0a090"/><rect x="308.60" y="111.4" width="4.67" height="4.6" fill="#80607c"/><rect x="313.18" y="111.4" width="4.67" height="4.6" fill="#8c9094"/><rect x="317.75" y="111.4" width="4.67" height="4.6" fill="#888c94"/><rect x="322.32" y="111.4" width="4.67" height="4.6" fill="#e8e0d0"/><rect x="272.00" y="115.9" width="4.67" height="3.0" fill="#c8c8d0"/><rect x="276.57" y="115.9" width="4.67" height="3.0" fill="#e8e0d8"/><rect x="281.15" y="115.9" width="4.67" height="3.0" fill="#dce4ec"/><rect x="285.73" y="115.9" width="4.67" height="3.0" fill="#d0ccd0"/><rect x="290.30" y="115.9" width="4.67" height="3.0" fill="#f0ece8"/><rect x="294.88" y="115.9" width="4.67" height="3.0" fill="#b0b4c4"/><rect x="299.45" y="115.9" width="4.67" height="3.0" fill="#e0e0e4"/><rect x="304.02" y="115.9" width="4.67" height="3.0" fill="#f0f0e8"/><rect x="308.60" y="115.9" width="4.67" height="3.0" fill="#dcd4e0"/><rect x="313.18" y="115.9" width="4.67" height="3.0" fill="#f0ece8"/><rect x="317.75" y="115.9" width="4.67" height="3.0" fill="#dce0e8"/><rect x="322.32" y="115.9" width="4.67" height="3.0" fill="#ffffff"/><rect x="272" y="111.4" width="1.6" height="4.5" fill="#a9a4a8"/><rect x="298" y="117.6" width="2" height="1.6" fill="#5a6078"/><rect x="297.5" y="103.5" width="4.6" height="3" fill="#eef0f6"/></svg>
<!-- context menu 1 -->
<div class="abs menu" style="left:109px;top:188px;width:209px;height:271px"></div>
<div class="abs iconcol" style="left:110px;top:189px;width:21px;height:269px"></div>
<svg class="abs" style="left:304px;top:235.7px" width="4" height="7" viewBox="0 0 4 7"><path d="M0 0L4 3.5L0 7Z" fill="#111"/></svg>
<div class="abs sep" style="left:138.7px;top:251.9px;width:177.3px"></div>
<div class="abs hl" style="left:111px;top:254.2px;width:205px;height:19.8px"></div>
<svg class="abs" style="left:304px;top:260.5px" width="4" height="7" viewBox="0 0 4 7"><path d="M0 0L4 3.5L0 7Z" fill="#111"/></svg>
<div class="abs sep" style="left:138.7px;top:276.7px;width:177.3px"></div>
<svg class="abs" style="left:304px;top:285.3px" width="4" height="7" viewBox="0 0 4 7"><path d="M0 0L4 3.5L0 7Z" fill="#111"/></svg>
<div class="abs sep" style="left:138.7px;top:321.3px;width:177.3px"></div>
<div class="abs sep" style="left:138.7px;top:346.1px;width:177.3px"></div>
<svg class="abs" style="left:304px;top:354.7px" width="4" height="7" viewBox="0 0 4 7"><path d="M0 0L4 3.5L0 7Z" fill="#111"/></svg>
<div class="abs sep" style="left:138.7px;top:370.9px;width:177.3px"></div>
<div class="abs sep" style="left:138.7px;top:415.5px;width:177.3px"></div>
<!-- submenu -->
<div class="abs menu" style="left:317px;top:211px;width:309px;height:380px"></div>
<div class="abs iconcol" style="left:318px;top:212px;width:21.2px;height:380px"></div>
<div class="abs sep" style="left:346.7px;top:235.1px;width:277.3px"></div>
<div class="abs sep" style="left:346.7px;top:279.7px;width:277.3px"></div>
<svg class="abs" style="left:612px;top:288.3px" width="4" height="7" viewBox="0 0 4 7"><path d="M0 0L4 3.5L0 7Z" fill="#111"/></svg>
<div class="abs sep" style="left:346.7px;top:304.5px;width:277.3px"></div>
<svg class="abs" style="left:612px;top:332.9px" width="4" height="7" viewBox="0 0 4 7"><path d="M0 0L4 3.5L0 7Z" fill="#111"/></svg>
<div class="abs sep" style="left:346.7px;top:349.1px;width:277.3px"></div>
<div class="abs sep" style="left:346.7px;top:413.5px;width:277.3px"></div>
<div class="abs sep" style="left:346.7px;top:438.3px;width:277.3px"></div>
<!-- green boxes -->
<div class="abs green" style="left:40px;top:184px;width:75.4px;height:18.5px"></div>
<div class="abs green" style="left:112.3px;top:251.8px;width:104px;height:25.7px"></div>
<div class="abs green" style="left:342px;top:349.8px;width:83.8px;height:23.2px"></div>
<span class="t" style="left:141.75px;top:193.0px;color:#111;transform:scaleX(0.9106);">New Database...</span>
<span class="t" style="left:141.75px;top:212.0px;color:#111;transform:scaleX(0.9367);">New Query</span>
<span class="t" style="left:141.75px;top:232.0px;color:#111;transform:scaleX(0.8963);">Script Database as</span>
<span class="t" style="left:141.75px;top:257.0px;color:#111;transform:scaleX(0.8386);">Tasks</span>
<span class="t" style="left:141.75px;top:282.0px;color:#111;transform:scaleX(0.9114);">Policies</span>
<span class="t" style="left:141.75px;top:302.0px;color:#111;transform:scaleX(0.8579);">Facets</span>
<span class="t" style="left:141.75px;top:326.0px;color:#111;transform:scaleX(0.9205);">Start PowerShell</span>
<span class="t" style="left:141.75px;top:351.0px;color:#111;transform:scaleX(0.8971);">Reports</span>
<span class="t" style="left:141.75px;top:376.0px;color:#111;transform:scaleX(0.9226);">Rename</span>
<span class="t" style="left:141.75px;top:396.0px;color:#111;transform:scaleX(0.9154);">Delete</span>
<span class="t" style="left:141.75px;top:421.0px;color:#111;transform:scaleX(0.8789);">Refresh</span>
<span class="t" style="left:141.75px;top:440.0px;color:#111;transform:scaleX(0.9282);">Properties</span>
<span class="t" style="left:349.75px;top:215.0px;color:#111;transform:scaleX(0.9155);">Detach...</span>
<span class="t" style="left:349.75px;top:240.0px;color:#111;transform:scaleX(0.9651);">Take Offline</span>
<span class="t" style="left:349.75px;top:260.0px;color:#8d8d93;transform:scaleX(0.9642);">Bring Online</span>
<span class="t" style="left:349.75px;top:285.0px;color:#111;transform:scaleX(0.9075);">Shrink</span>
<span class="t" style="left:349.75px;top:310.0px;color:#111;transform:scaleX(0.9026);">Back Up...</span>
<span class="t" style="left:349.75px;top:329.0px;color:#111;transform:scaleX(0.8985);">Restore</span>
<span class="t" style="left:349.75px;top:354.0px;color:#111;transform:scaleX(0.9834);">Mirror...</span>
<span class="t" style="left:349.75px;top:374.0px;color:#111;transform:scaleX(0.9750);">Launch Database Mirroring Monitor...</span>
<span class="t" style="left:349.75px;top:394.0px;color:#111;transform:scaleX(0.9310);">Ship Transaction Logs...</span>
<span class="t" style="left:349.75px;top:419.0px;color:#111;transform:scaleX(0.9089);">Generate Scripts...</span>
<span class="t" style="left:349.75px;top:443.0px;color:#111;transform:scaleX(0.9619);">Extract Data-tier Application...</span>
<span class="t" style="left:349.75px;top:463.0px;color:#111;transform:scaleX(0.9274);">Deploy Database to Windows Azure SQL Database...</span>
<span class="t" style="left:349.75px;top:483.0px;color:#111;transform:scaleX(0.9391);">Deploy Database to a Windows Azure VM...</span>
<span class="t" style="left:349.75px;top:503.0px;color:#111;transform:scaleX(0.9643);">Export Data-tier Application...</span>
<span class="t" style="left:349.75px;top:523.0px;color:#111;transform:scaleX(0.9470);">Register as Data-tier Application...</span>
<span class="t" style="left:349.75px;top:542.0px;color:#111;transform:scaleX(0.9654);">Upgrade Data-tier Application...</span>
<span class="t" style="left:349.75px;top:562.0px;color:#8d8d93;transform:scaleX(0.9580);">Delete Data-tier Application...</span>
<!-- numbered circles -->
<div class="abs circ" style="left:16.8px;top:179px;width:26.2px;height:26.4px"></div>
<div class="abs circ" style="left:88.4px;top:254.1px;width:26px;height:26.2px"></div>
<div class="abs circ" style="left:313.3px;top:348.5px;width:26.5px;height:26.5px"></div>
<span class="t num" style="left:24.6px;top:184.2px">1</span>
<span class="t num" style="left:96.8px;top:259.2px">2</span>
<span class="t num" style="left:322.2px;top:353.7px">3</span>
</body>
</html>
